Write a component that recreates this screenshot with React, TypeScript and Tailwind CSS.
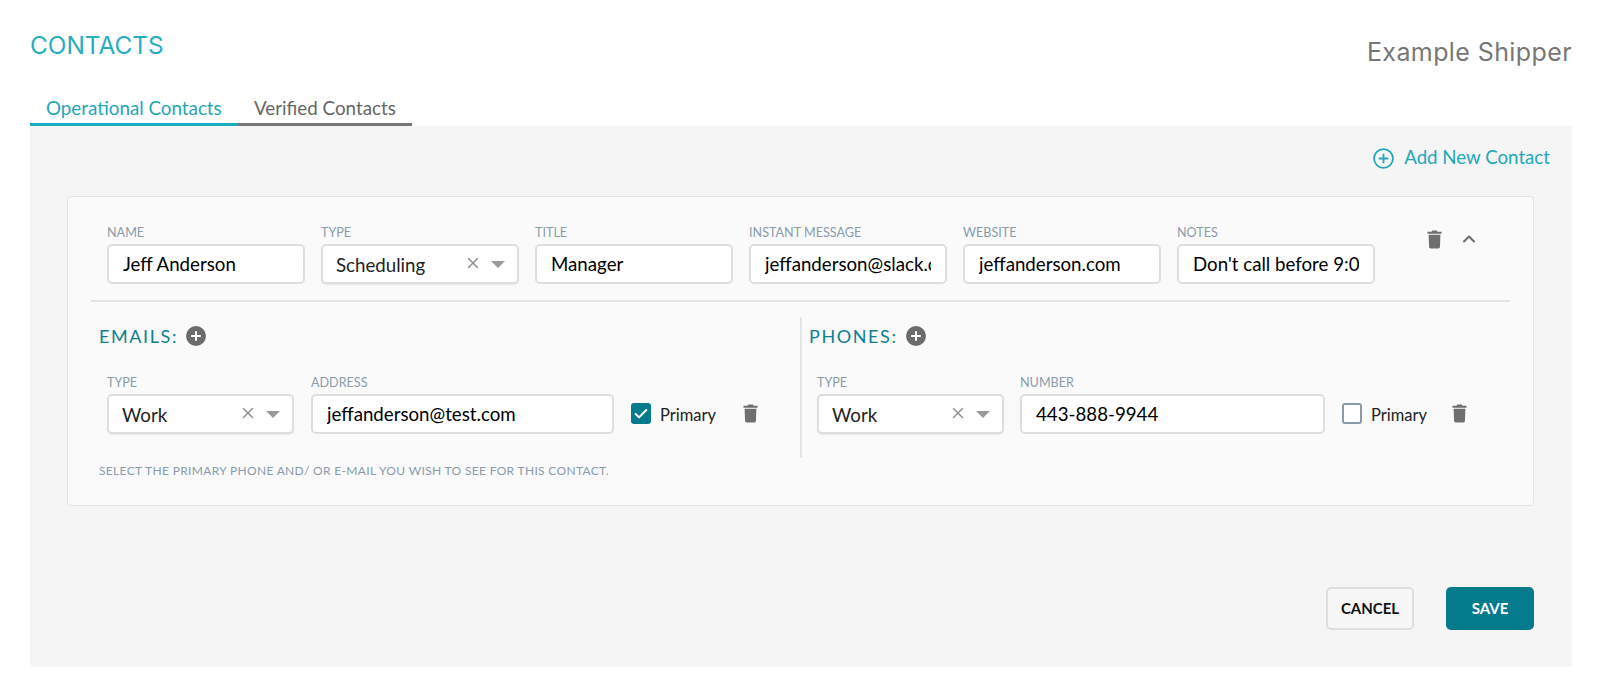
import { Check, ChevronUp, Plus, X } from "lucide-react";

const Trash = () => (
    <svg width="15" height="19" viewBox="0 0 16 20" className="fill-[#6f6f6f]">
        <path d="M5.500 0.500h5l.7 1.300H15.500v2H.5v-2h4.300z" />
        <path d="M1.700 5h12.600l-.5 12.700c0 1-.8 1.800-1.800 1.800h-8c-1 0-1.800-.8-1.800-1.800z" />
    </svg>
);

const Field = ({label, value, w}: {label: string; value: string; w: string}) => (
    <div className={w}>
        <div className="h-[15px] text-[12.600px] leading-[15px] text-[#8a9cab]">{label}</div>
        <div className="mt-[4px] h-[40px] rounded-[5px] border-2 border-[#dedede] bg-white px-[14px] pt-[1px] text-[18.700px] leading-[35px] text-black">
            <div className="overflow-hidden whitespace-nowrap">{value}</div>
        </div>
    </div>
);

const SelectField = ({label, value, w}: {label: string; value: string; w: string}) => (
    <div className={w}>
        <div className="h-[15px] text-[12.600px] leading-[15px] text-[#8a9cab]">{label}</div>
        <div className="mt-[4px] flex h-[40px] items-center rounded-[5px] border-2 border-[#dedede] bg-white pl-[13px] pr-[12px] text-[18.700px] text-[#222] shadow-[0_1px_1px_rgba(0,0,0,0.08)]">
            <span className="mt-[3px] flex-1">{value}</span>
            <X size={18} strokeWidth={2} className="mr-[9px] -mt-[2px] text-[#8f8f8f]" />
            <span className="h-0 w-0 border-x-[7px] border-t-[7px] border-x-transparent border-t-[#9a9a9a]" />
        </div>
    </div>
);

const SectionTitle = ({text}: {text: string}) => (
    <div className="flex items-center gap-[8px]">
        <span className="text-[18px] leading-[20px] tracking-[1.600px] text-[#0f7f90]">{text}</span>
        <span className="flex h-[20px] w-[20px] items-center justify-center rounded-full bg-[#6b6b6b]">
            <Plus size={14} strokeWidth={3.5} className="text-white" />
        </span>
    </div>
);

const Primary = ({checked}: {checked?: boolean}) => (
    <div className="mt-[28px] flex h-[21px] items-center">
        {checked ? (
            <span className="flex h-[21px] w-[20px] items-center justify-center rounded-[3px] bg-[#047b8c]">
                <Check size={16} strokeWidth={3} className="text-white" />
            </span>
        ) : (
            <span className="h-[21px] w-[20px] rounded-[3px] border-2 border-[#8a9ba8] bg-white" />
        )}
        <span className="ml-[9px] mt-[4px] text-[16.500px] text-[#222]">Primary</span>
    </div>
);

const App = () => {
    return (
        <div className="h-[695px] w-[1600px] overflow-hidden bg-white pl-[30px] pr-[28px] font-['Lato',sans-serif]">
            <div className="flex h-[90px] items-start justify-between">
                <h1 className="mt-[30px] font-['Inter',sans-serif] text-[24.400px] leading-[30px] text-[#27aebf]">CONTACTS</h1>
                <div className="mt-[37px] font-['Inter',sans-serif] text-[25px] leading-[30px] tracking-[0.4px] text-[#777]">Example Shipper</div>
            </div>

            <div className="flex h-[36px] text-[18.800px]">
                <div className="w-[208px] border-b-[3px] border-[#19adc0] pl-[16px] pt-[6px] leading-[24px] text-[#1fa6b8]">Operational Contacts</div>
                <div className="w-[174px] border-b-[3px] border-[#777] pl-[16px] pt-[6px] leading-[24px] text-[#666]">Verified Contacts</div>
            </div>

            <div className="h-[541px] bg-[#f5f5f5] pl-[37px] pr-[38px]">
                <div className="-mr-[16px] flex h-[70px] items-start justify-end pt-[18px]">
                    <div className="flex items-center text-[18.700px] leading-[24px] text-[#23a8ba]">
                        <svg width="21" height="21" viewBox="0 0 20 20" fill="none" stroke="#23a8ba" strokeWidth="1.700" className="mr-[10px] mt-[4px]">
                            <circle cx="10" cy="10" r="9" />
                            <path d="M10 5.500v9M5.500 10h9" />
                        </svg>
                        Add New Contact
                    </div>
                </div>

                <div className="h-[310px] rounded-[4px] border border-[#e3e5e5] bg-[#fafafa] pl-[23px] pr-[23px] pt-[28px]">
                    <div className="flex items-start pl-[16px]">
                        <div className="flex gap-[16px]">
                            <Field label="NAME" value="Jeff Anderson" w="w-[198px]" />
                            <SelectField label="TYPE" value="Scheduling" w="w-[198px]" />
                            <Field label="TITLE" value="Manager" w="w-[198px]" />
                            <Field label="INSTANT MESSAGE" value="jeffanderson@slack.com" w="w-[198px]" />
                            <Field label="WEBSITE" value="jeffanderson.com" w="w-[198px]" />
                            <Field label="NOTES" value="Don't call before 9:00 am" w="w-[198px]" />
                        </div>
                        <div className="ml-[52px] mt-[2px] flex h-[24px] items-center">
                            <Trash />
                            <ChevronUp size={20} strokeWidth={2.5} className="ml-[17px] text-[#6f6f6f]" />
                        </div>
                    </div>

                    <div className="mt-[16px] h-[2px] bg-[#e4e4e4]" />

                    <div className="flex pt-[15px]">
                        <div className="w-[709px] pl-[8px]">
                            <div className="pt-[9px]"><SectionTitle text="EMAILS:" /></div>
                            <div className="mt-[29px] flex pl-[8px]">
                                <SelectField label="TYPE" value="Work" w="w-[187px]" />
                                <Field label="ADDRESS" value="jeffanderson@test.com" w="ml-[17px] w-[303px]" />
                                <div className="ml-[17px]"><Primary checked /></div>
                                <div className="ml-[27px] mt-[29px]"><Trash /></div>
                            </div>
                            <div className="mt-[30px] text-[12px] leading-[14px] tracking-[0.33px] text-[#8a9cab]">SELECT THE PRIMARY PHONE AND/ OR E-MAIL YOU WISH TO SEE FOR THIS CONTACT.</div>
                        </div>
                        <div className="h-[141px] w-[2px] bg-[#e4e4e4]" />
                        <div className="pl-[7px]">
                            <div className="pt-[9px]"><SectionTitle text="PHONES:" /></div>
                            <div className="mt-[29px] flex pl-[8px]">
                                <SelectField label="TYPE" value="Work" w="w-[187px]" />
                                <Field label="NUMBER" value="443-888-9944" w="ml-[16px] w-[305px]" />
                                <div className="ml-[17px]"><Primary /></div>
                                <div className="ml-[25px] mt-[29px]"><Trash /></div>
                            </div>
                        </div>
                    </div>
                </div>

                <div className="mt-[81px] flex justify-end gap-[32px]">
                    <button className="h-[43px] w-[88px] rounded-[5px] border-2 border-[#dedede] bg-[#f7f7f7] text-[15px] font-bold text-[#111]">CANCEL</button>
                    <button className="h-[43px] w-[88px] rounded-[5px] bg-[#047b8c] text-[15px] font-bold text-white">SAVE</button>
                </div>
            </div>
        </div>
    );
};

export default App;
